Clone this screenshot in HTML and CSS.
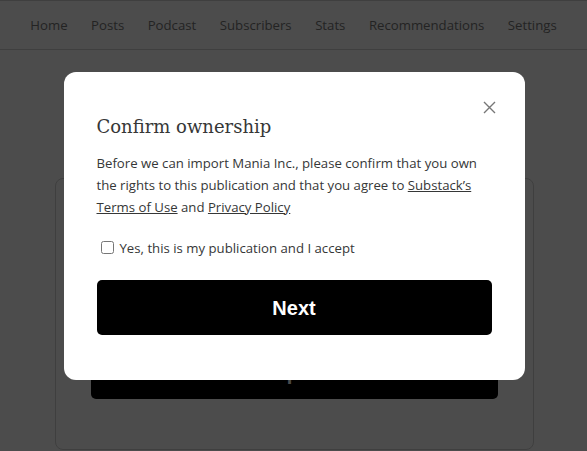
FILE: index.html
```html
<!DOCTYPE html>
<html lang="en">
<head>
    <meta charset="UTF-8">
    <meta name="viewport" content="width=device-width, initial-scale=1.0">
    <title>Import</title>
    <link rel="stylesheet" href="styles.css">
</head>
<body>
    <nav class="topnav">
        <a href="#">Home</a>
        <a href="#">Posts</a>
        <a href="#">Podcast</a>
        <a href="#">Subscribers</a>
        <a href="#">Stats</a>
        <a href="#">Recommendations</a>
        <a href="#">Settings</a>
    </nav>

    <main class="page">
        <div class="card">
            <button class="big-btn">Import</button>
        </div>
    </main>

    <div class="overlay">
        <div class="modal">
            <button class="close" aria-label="Close">
                <svg width="13" height="13" viewBox="0 0 13 13">
                    <path d="M1 1L12 12M12 1L1 12" stroke="#777" stroke-width="1.4" fill="none"/>
                </svg>
            </button>
            <h2 class="modal-title">Confirm ownership</h2>
            <p class="modal-text">Before we can import Mania Inc., please confirm that you own the rights to this publication and that you agree to <a href="#">Substack’s Terms of Use</a> and <a href="#">Privacy Policy</a></p>
            <label class="check">
                <input type="checkbox">
                <span>Yes, this is my publication and I accept</span>
            </label>
            <button class="big-btn">Next</button>
        </div>
    </div>
</body>
</html>
```

FILE: styles.css
```css
body {
    margin: 0;
    background: #fff;
    font-family: "Open Sans", "Noto Sans", sans-serif;
    color: #363737;
}
.topnav {
    display: flex;
    justify-content: center;
    gap: 23.5px;
    height: 48px;
    align-items: center;
    border-top: 1px solid #d2d2d2;
    border-bottom: 1px solid #d2d2d2;
}
.topnav a {
    color: #777;
    text-decoration: none;
    font-size: 13.2px;
}
.page {
    padding: 128px 53px 0 55px;
}
.card {
    border: 1px solid #d2d2d2;
    border-radius: 8px;
    height: 105px;
    padding: 165px 35px 0;
}
.big-btn {
    display: block;
    width: 100%;
    height: 55px;
    padding-top: 4px;
    border: none;
    border-radius: 5px;
    background: #000;
    color: #fff;
    font-family: "Liberation Sans", Arial, sans-serif;
    font-weight: bold;
    font-size: 20px;
    cursor: pointer;
}
.overlay {
    position: fixed;
    inset: 0;
    padding-left: 1px;
    background: rgba(0, 0, 0, 0.7);
    display: flex;
    justify-content: center;
    align-items: center;
}
.modal {
    position: relative;
    background: #fff;
    border-radius: 12px;
    width: 395px;
    padding: 40px 33px 45px;
}
.close {
    position: absolute;
    top: 29px;
    right: 29px;
    border: none;
    background: none;
    padding: 0;
    cursor: pointer;
}
.modal-title {
    margin: 0;
    font-family: "DejaVu Serif", "Liberation Serif", serif;
    font-weight: normal;
    font-size: 18px;
    line-height: 30px;
}
.modal-text {
    margin: 10px 0 0;
    font-size: 13.2px;
    line-height: 22px;
}
.modal-text a {
    color: inherit;
}
.check {
    display: flex;
    align-items: center;
    gap: 6px;
    margin: 20px 0 22px;
    font-size: 13.2px;
    line-height: 20px;
}
.check input {
    margin: 0 0 0 4px;
    width: 13px;
    height: 13px;
}
```
